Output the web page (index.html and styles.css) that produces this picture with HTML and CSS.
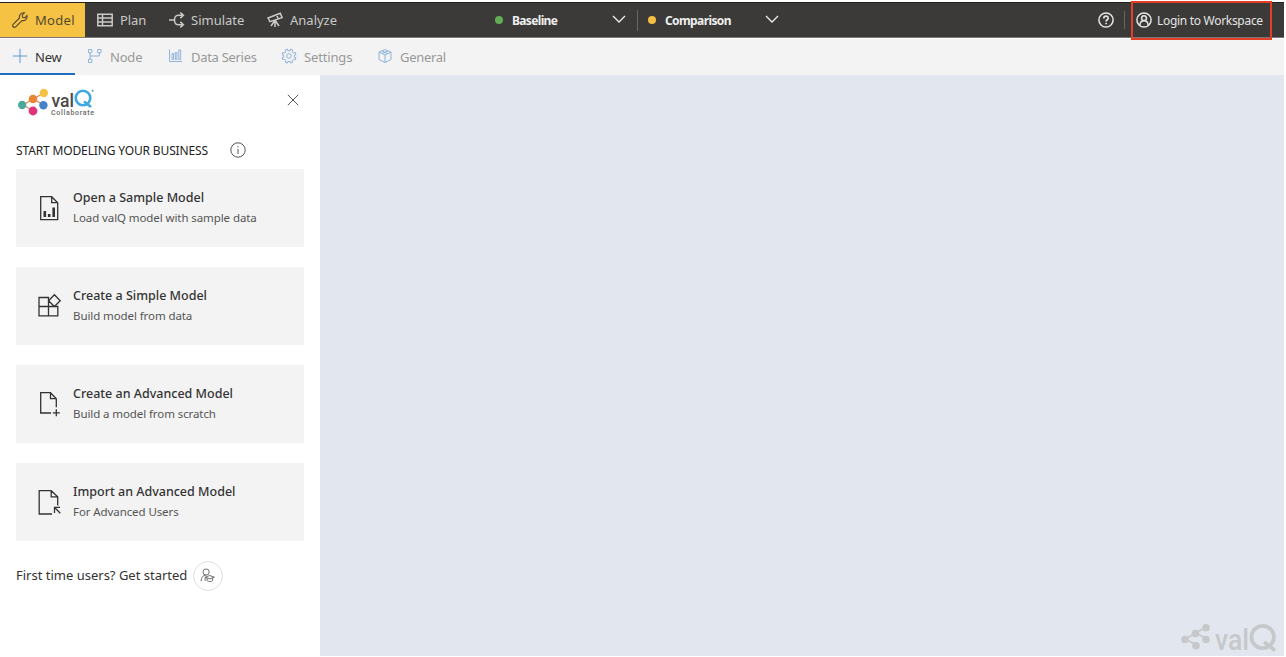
FILE: index.html
```html
<!DOCTYPE html>
<html lang="en">
<head>
<meta charset="utf-8">
<title>valQ Collaborate</title>
<link rel="stylesheet" href="styles.css">
</head>
<body>
<div class="app">
  <header class="topbar">
    <nav class="modes">
      <a class="mode mode-model active"><svg class="ico" viewBox="0 0 16 16"><path d="M1.1 12.3 7.5 6C6.8 3.2 9 .3 12.4.9L10.2 3.2l.5 2.1 2.2.5L15 3.5c.8 3.5-2.2 5.7-5 5L3.7 14.9c-1.6 1.5-4.2-1-2.6-2.6z"/></svg><span>Model</span></a>
      <a class="mode mode-plan"><svg class="ico" viewBox="0 0 16 16"><path d="M.8 2.2h14.4v11.6H.8zM.8 6h14.4M.8 10h14.4M5.5 2.2v11.6" stroke-width="1.5"/></svg><span>Plan</span></a>
      <a class="mode mode-simulate"><svg class="ico" viewBox="0 0 16 16"><path d="M0 8h5.5M14 3.3H10C6 3.3 5.5 5 5.5 8s.5 4.7 4.5 4.7h4M11.3.5l3 2.8-3 2.8M11.3 9.9l3 2.8-3 2.8" stroke-width="1.6"/></svg><span>Simulate</span></a>
      <a class="mode mode-analyze"><svg class="ico" viewBox="0 0 16 16"><path d="m1 6 12.3-4.7 1.8 4.3L3 9.7zM9.5 2.8l1.8 4.1M8 8v7M7.5 9 4 14M8.5 9l3.5 5M6 9.5h4" stroke-width="1.5"/></svg><span>Analyze</span></a>
    </nav>
    <div class="scenarios">
      <div class="scenario baseline"><i class="dot green"></i><span>Baseline</span><svg class="chev" viewBox="0 0 14 8"><path d="m1 1 6 6 6-6"/></svg></div>
      <div class="scenario comparison"><i class="dot yellow"></i><span>Comparison</span><svg class="chev" viewBox="0 0 14 8"><path d="m1 1 6 6 6-6"/></svg></div>
    </div>
    <div class="account">
      <svg class="help" viewBox="0 0 16 16"><circle cx="8" cy="8" r="7.1"/><path d="M5.8 6.4C5.8 3.4 10.3 3.5 10.2 6.2c0 1.6-2.1 1.6-2.1 3.2M8.1 10.7v1.5" stroke-width="1.7"/></svg>
      <i class="rule"></i>
      <a class="login"><svg class="help" viewBox="0 0 16 16"><circle cx="8" cy="8" r="7.1"/><circle cx="8" cy="6.2" r="2.4"/><path d="M3.9 13.3c.2-6 8-6 8.2 0"/></svg><span>Login to Workspace</span></a>
    </div>
  </header>
  <nav class="tools">
    <a class="tool tool-new active"><svg class="ico" viewBox="0 0 16 16"><path d="M8 .8v14.4M.8 8h14.4"/></svg><span>New</span></a>
    <a class="tool tool-node"><svg class="ico" viewBox="0 0 16 16"><path d="M1.5 1.5h3.3v3.3H1.5zM10.7 1.5H14v3.3h-3.3zM1.5 11.2h3.3v3.3H1.5zM3.1 4.8v6.4M3.1 8h9.2V4.8"/></svg><span>Node</span></a>
    <a class="tool tool-data"><svg class="ico" viewBox="0 0 16 16"><path d="M1.5 1.5v12H14M4 5.5h1.6v6H4zM7.3 4.5h1.6v7H7.3zM10.8 2h1.9v9.5h-1.9z"/></svg><span>Data Series</span></a>
    <a class="tool tool-settings"><svg class="ico" viewBox="0 0 16 16"><path d="m6.5 1.1.4 1.7c.7-.2 1.5-.2 2.2 0l.4-1.7 2.4 1-.9 1.5c.7.4 1.1.9 1.5 1.5l1.5-.9 1 2.4-1.7.4v2.2l1.7.4-1 2.4-1.5-.9c-.4.6-.9 1.1-1.5 1.5l.9 1.5-2.4 1-.4-1.7c-.7.2-1.5.2-2.2 0l-.4 1.7-2.4-1 .9-1.5A5 5 0 0 1 3.5 11L2 12 1 9.6l1.7-.4V7L1 6.6l1-2.4 1.5.9A5 5 0 0 1 5 3.6l-.9-1.5z"/><circle cx="8" cy="8" r="2.3"/></svg><span>Settings</span></a>
    <a class="tool tool-general"><svg class="ico" viewBox="0 0 16 16"><path d="m8 1.5 6 2.6v7.5L8 14.5l-6-2.9V4.1zM2 4.1l6 2.8 6-2.8M8 6.9v7.6M5 2.9l6 2.8M11 2.9 5 5.6"/></svg><span>General</span></a>
  </nav>
  <main class="work">
    <aside class="panel">
      <div class="brand">
        <svg class="logo" viewBox="0 0 80 32">
          <path d="M5 17 15 11 26 5M15 11l11 6M5 17l11 6" stroke="#e58b54" stroke-width="1.4"/>
          <g stroke="none"><circle cx="4.2" cy="17" r="4.2" fill="#4aa99b"/><circle cx="15" cy="11" r="4.3" fill="#e98435"/><circle cx="25.8" cy="5" r="4.2" fill="#f5c344"/><circle cx="25.4" cy="17.2" r="4.2" fill="#4583c8"/><circle cx="15" cy="23" r="4.4" fill="#df3279"/></g>
          <text x="33.5" y="19" class="logo-val" textLength="22.5" lengthAdjust="spacingAndGlyphs">val</text>
          <circle cx="65" cy="10" r="7.3" stroke="#3ca8e4" stroke-width="2.6"/><path d="m66 13.5 7 5.5" stroke="#3ca8e4" stroke-width="2.6"/><circle cx="74.7" cy="2.8" r="1" fill="#888" stroke="none"/>
          <text x="33" y="27.2" class="logo-sub" textLength="43">Collaborate</text>
        </svg>
        <svg class="close" viewBox="0 0 12 12"><path d="m.8.8 10.4 10.4M11.2.8.8 11.2"/></svg>
      </div>
      <div class="heading"><span>START MODELING YOUR BUSINESS</span><svg class="info" viewBox="0 0 16 16"><circle cx="8" cy="8" r="7.2"/><path d="M8 7v5M8 4.2v1.3"/></svg></div>
      <div class="cards">
        <a class="card"><svg class="card-ico" viewBox="0 0 26 26"><path d="M4.7 1.7h11l6 6v17h-17zM15.7 1.7v6h6"/><path d="M8.8 22v-6M13.2 22v-3M17.7 22v-9.5" stroke-width="2.6"/></svg><div><b>Open a Sample Model</b><p>Load valQ model with sample data</p></div></a>
        <a class="card"><svg class="card-ico" viewBox="0 0 26 26"><path d="M3 4.5h9.5v18.3H3zM3 13.5h18.8v9.3H12.5M18.4 1.7l5.8 6-5.8 5.8-5.8-5.8z"/></svg><div><b>Create a Simple Model</b><p>Build model from data</p></div></a>
        <a class="card"><svg class="card-ico" viewBox="0 0 26 26"><path d="M15 22H4.7V1.7h9.8l5.8 6v8.5M14.5 1.7v6h5.8M20.3 18.3v7M16.8 21.8h7"/></svg><div><b>Create an Advanced Model</b><p>Build a model from scratch</p></div></a>
        <a class="card"><svg class="card-ico" viewBox="0 0 26 26"><path d="M16 25H3.2V1.7h12l6.5 6.2v8.5M15.2 1.7v6.2h6.5M18.5 24v-5.6h5.5M18.5 18.4l5.8 5.8"/></svg><div><b>Import an Advanced Model</b><p>For Advanced Users</p></div></a>
      </div>
      <div class="start"><span>First time users? Get started</span><i class="learn"><svg viewBox="0 0 16 16"><circle cx="6.5" cy="4.3" r="3.3"/><path d="M1.2 14.2c0-4 2-6.6 5.3-6.6M5.5 9.8l5-1.8 4.8 1.8-4.8 1.8zM7.5 10.7v2.6c1.5 1.5 4.5 1.5 6 0v-2.6M5.5 9.8v4"/></svg></i></div>
    </aside>
    <section class="canvas">
      <svg class="watermark" viewBox="0 0 98 32">
        <path d="M5 17 16 11 26 5M16 11l11 6M5 17l12 6" stroke="#c6c8ca" stroke-width="1.6"/>
        <g fill="#c6c8ca" stroke="none"><circle cx="5" cy="17.5" r="3.8"/><circle cx="15.5" cy="11.5" r="3.8"/><circle cx="26" cy="5.8" r="3.8"/><circle cx="26" cy="17.5" r="3.8"/><circle cx="16" cy="23.8" r="3.8"/></g>
        <text x="35" y="28" class="wm-val" textLength="34" lengthAdjust="spacingAndGlyphs">val</text>
        <circle cx="82.7" cy="15" r="11.2" stroke="#c6c8ca" stroke-width="3.8"/><path d="m84 20 11 8.5" stroke="#c6c8ca" stroke-width="3.8"/>
      </svg>
    </section>
  </main>
</div>
</body>
</html>
```
FILE: styles.css
```css
* { box-sizing: border-box; }
body { margin: 0; background: #fff; font-family: "Noto Sans", "Open Sans", sans-serif; overflow: hidden; }
svg { display: block; flex: none; fill: none; stroke: currentColor; overflow: visible; }
span, b, p { white-space: nowrap; }
.app { width: 1284px; height: 656px; padding-top: 2px; display: flex; flex-direction: column; }
.topbar { height: 36px; flex: none; display: flex; background: #3b3a39; border-top: 1px solid #222; border-bottom: 1px solid #777; color: #c9c9c8; position: relative; z-index: 1; }
.modes, .scenarios, .account, .tools { display: flex; }
.mode, .tool { display: flex; align-items: center; gap: 7px; font-size: 13px; }
.mode { padding-left: 12px; }
.ico { width: 16px; height: 16px; stroke-width: 1.1; }
.mode.active { background: #f6c244; color: #554a30; }
.mode-model { width: 85px; letter-spacing: .3px; }
.mode-plan { width: 72px; letter-spacing: -.1px; }
.mode-simulate { width: 98px; gap: 6px; letter-spacing: 0; }
.mode-analyze { width: 240px; letter-spacing: 0; }
.scenario { display: flex; align-items: center; font-size: 12px; font-weight: 700; color: #eee; }
.baseline { width: 143px; letter-spacing: -.65px; }
.baseline::after { content: ""; width: 1px; height: 21px; background: #666; margin-left: auto; }
.comparison { width: 131px; margin-left: 10px; letter-spacing: -.6px; }
.dot { width: 8px; height: 8px; border-radius: 50%; flex: none; margin-right: 9px; }
.green { background: #62ad55; }
.yellow { background: #f5bd41; }
.chev { width: 14px; height: 8px; margin-left: auto; margin-bottom: 3px; stroke-width: 1.3; }
.baseline .chev { margin-left: 55px; }
.account { align-items: center; margin-left: auto; padding-right: 12px; color: #e4e4e4; }
.help { width: 16px; height: 16px; stroke-width: 1.5; }
.rule { width: 1px; height: 18px; margin: 0 6px 0 10px; background: #666; }
.login { width: 141px; height: 39px; border: 2px solid #e33f27; display: flex; align-items: center; gap: 5px; padding-left: 3px; font-size: 12px; letter-spacing: -.3px; }
.tools { height: 37px; flex: none; background: #f3f3f3; border-top: 1px solid #fff; color: #999; }
.tool { padding-left: 12px; }
.tool .ico { color: #8eb3dc; stroke-width: 1; margin-bottom: 2px; }
.tool.active { color: #333; border-bottom: 2px solid #1f6fc0; padding-top: 2px; }
.tool-new.active .ico { color: #5b9ad6; }
.tool-new { width: 75px; letter-spacing: -.2px; }
.tool-node { width: 81px; letter-spacing: -.2px; }
.tool-data { width: 113px; letter-spacing: -.3px; }
.tool-settings { width: 96px; letter-spacing: -.15px; }
.tool-general { letter-spacing: -.3px; }
.work { flex: 1; min-height: 0; display: flex; }
.panel { width: 320px; padding: 13px 16px 0; background: #fff; }
.brand { height: 50px; display: flex; justify-content: space-between; }
.logo { width: 80px; height: 32px; margin-left: 2px; }
.logo text, .watermark text { stroke: none; font-family: Roboto, sans-serif; }
.logo-val { font-size: 18px; font-weight: 500; fill: #4a4a4a; }
.logo-sub { font-size: 7px; font-weight: 500; fill: #666; }
.close { width: 12px; height: 12px; margin: 6px 5px 0 0; color: #555; stroke-width: 1; }
.heading { height: 31px; display: flex; align-items: flex-start; gap: 22px; font-size: 12px; line-height: 26px; letter-spacing: -.14px; color: #222; }
.info { width: 16px; height: 16px; margin-top: 4px; color: #555; stroke-width: 1; }
.cards { display: flex; flex-direction: column; gap: 20px; }
.card { height: 78px; background: #f3f3f3; display: flex; align-items: center; gap: 11px; padding-left: 20px; width: 288px; }
.card-ico { width: 26px; height: 26px; color: #333; stroke-width: 1.3; }
.card b { display: block; font-size: 12.5px; line-height: 20px; font-weight: 500; color: #333; }
.card p { margin: 0; font-size: 11.5px; line-height: 20px; letter-spacing: -.09px; color: #555; }
.start { display: flex; align-items: center; gap: 6px; margin-top: 20px; font-size: 13px; color: #333; }
.start span { padding-bottom: 2px; }
.learn { width: 30px; height: 30px; border: 1px solid #ddd; border-radius: 50%; display: grid; place-items: center; color: #666; }
.learn svg { width: 15px; height: 15px; stroke-width: 1; margin: 0 2px 2px 0; }
.canvas { flex: 1; background: #e2e6ef; display: flex; justify-content: flex-end; align-items: flex-end; padding: 0 6px 2px 0; }
.watermark { width: 98px; height: 32px; }
.wm-val { font-size: 30px; font-weight: 500; fill: #c6c8ca; }
```
